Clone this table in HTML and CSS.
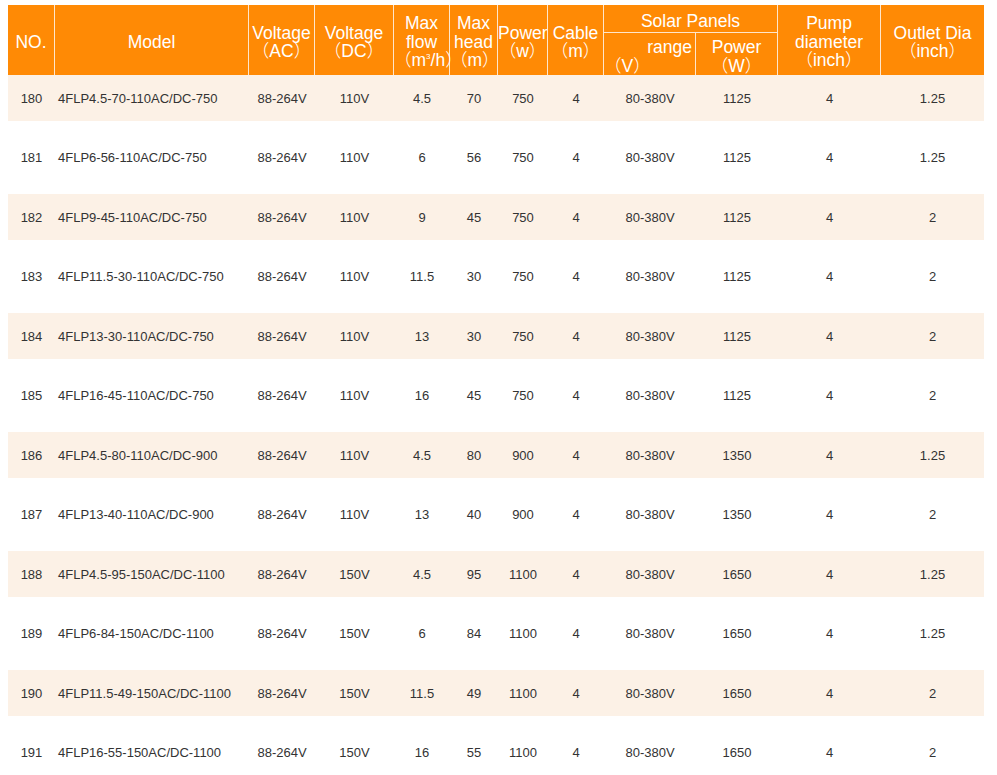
FILE: index.html
```html
<!DOCTYPE html>
<html>
<head>
<meta charset="utf-8">
<link rel="stylesheet" href="styles.css">
</head>
<body>
<table class="spec">
  <colgroup>
    <col class="c-no"><col class="c-model"><col class="c-vac"><col class="c-vdc"><col class="c-flow"><col class="c-head"><col class="c-pow"><col class="c-cable"><col class="c-range"><col class="c-spow"><col class="c-pump"><col class="c-outlet">
  </colgroup>
  <thead>
    <tr class="h1">
      <th rowspan="2">NO.</th>
      <th rowspan="2">Model</th>
      <th rowspan="2">Voltage<br><span class="fw">（</span>AC<span class="fw">）</span></th>
      <th rowspan="2">Voltage<br><span class="fw">（</span>DC<span class="fw">）</span></th>
      <th rowspan="2">Max<br>flow<br><span class="fw">（</span>m<sup>3</sup>/h<span class="fw">）</span></th>
      <th rowspan="2">Max<br>head<br><span class="fw">（</span>m<span class="fw">）</span></th>
      <th rowspan="2">Power<br><span class="fw">（</span>w<span class="fw">）</span></th>
      <th rowspan="2">Cable<br><span class="fw">（</span>m<span class="fw">）</span></th>
      <th colspan="2" class="solar">Solar Panels</th>
      <th rowspan="2">Pump<br>diameter<br><span class="fw">（</span>inch<span class="fw">）</span></th>
      <th rowspan="2" class="outlet">Outlet Dia<br><span class="fw">（</span>inch<span class="fw">）</span></th>
    </tr>
    <tr class="h2">
      <th class="range"><span class="r1">range</span><span class="r2"><span class="fw">（</span>V<span class="fw">）</span></span></th>
      <th>Power<br><span class="fw">（</span>W<span class="fw">）</span></th>
    </tr>
  </thead>
  <tbody>
    <tr class="cream"><td>180</td><td class="model">4FLP4.5-70-110AC/DC-750</td><td>88-264V</td><td>110V</td><td>4.5</td><td>70</td><td>750</td><td>4</td><td>80-380V</td><td>1125</td><td>4</td><td>1.25</td></tr>
    <tr class="plain"><td>181</td><td class="model">4FLP6-56-110AC/DC-750</td><td>88-264V</td><td>110V</td><td>6</td><td>56</td><td>750</td><td>4</td><td>80-380V</td><td>1125</td><td>4</td><td>1.25</td></tr>
    <tr class="cream"><td>182</td><td class="model">4FLP9-45-110AC/DC-750</td><td>88-264V</td><td>110V</td><td>9</td><td>45</td><td>750</td><td>4</td><td>80-380V</td><td>1125</td><td>4</td><td>2</td></tr>
    <tr class="plain"><td>183</td><td class="model">4FLP11.5-30-110AC/DC-750</td><td>88-264V</td><td>110V</td><td>11.5</td><td>30</td><td>750</td><td>4</td><td>80-380V</td><td>1125</td><td>4</td><td>2</td></tr>
    <tr class="cream"><td>184</td><td class="model">4FLP13-30-110AC/DC-750</td><td>88-264V</td><td>110V</td><td>13</td><td>30</td><td>750</td><td>4</td><td>80-380V</td><td>1125</td><td>4</td><td>2</td></tr>
    <tr class="plain"><td>185</td><td class="model">4FLP16-45-110AC/DC-750</td><td>88-264V</td><td>110V</td><td>16</td><td>45</td><td>750</td><td>4</td><td>80-380V</td><td>1125</td><td>4</td><td>2</td></tr>
    <tr class="cream"><td>186</td><td class="model">4FLP4.5-80-110AC/DC-900</td><td>88-264V</td><td>110V</td><td>4.5</td><td>80</td><td>900</td><td>4</td><td>80-380V</td><td>1350</td><td>4</td><td>1.25</td></tr>
    <tr class="plain"><td>187</td><td class="model">4FLP13-40-110AC/DC-900</td><td>88-264V</td><td>110V</td><td>13</td><td>40</td><td>900</td><td>4</td><td>80-380V</td><td>1350</td><td>4</td><td>2</td></tr>
    <tr class="cream"><td>188</td><td class="model">4FLP4.5-95-150AC/DC-1100</td><td>88-264V</td><td>150V</td><td>4.5</td><td>95</td><td>1100</td><td>4</td><td>80-380V</td><td>1650</td><td>4</td><td>1.25</td></tr>
    <tr class="plain"><td>189</td><td class="model">4FLP6-84-150AC/DC-1100</td><td>88-264V</td><td>150V</td><td>6</td><td>84</td><td>1100</td><td>4</td><td>80-380V</td><td>1650</td><td>4</td><td>1.25</td></tr>
    <tr class="cream"><td>190</td><td class="model">4FLP11.5-49-150AC/DC-1100</td><td>88-264V</td><td>150V</td><td>11.5</td><td>49</td><td>1100</td><td>4</td><td>80-380V</td><td>1650</td><td>4</td><td>2</td></tr>
    <tr class="plain"><td>191</td><td class="model">4FLP16-55-150AC/DC-1100</td><td>88-264V</td><td>150V</td><td>16</td><td>55</td><td>1100</td><td>4</td><td>80-380V</td><td>1650</td><td>4</td><td>2</td></tr>
  </tbody>
</table>
</body>
</html>
```
FILE: styles.css
```css
html, body {
  margin: 0;
  padding: 0;
  background: #ffffff;
}
body {
  padding: 5px 0 0 8px;
  font-family: "Liberation Sans", Arial, "Noto Sans CJK SC", sans-serif;
}
.spec {
  border-collapse: separate;
  border-spacing: 0;
  table-layout: fixed;
  width: 976px;
}
.c-no { width: 47px; }
.c-model { width: 194px; }
.c-vac { width: 66px; }
.c-vdc { width: 79px; }
.c-flow { width: 56px; }
.c-head { width: 48px; }
.c-pow { width: 50px; }
.c-cable { width: 56px; }
.c-range { width: 92px; }
.c-spow { width: 82px; }
.c-pump { width: 103px; }
.c-outlet { width: 103px; }

.spec th {
  background: #ff8a05;
  color: #ffffff;
  font-weight: normal;
  font-size: 17.5px;
  line-height: 18.5px;
  padding: 4px 0 0 0;
  border-right: 1px solid #ffe6cc;
  vertical-align: middle;
  text-align: center;
  white-space: nowrap;
  overflow: visible;
  text-spacing-trim: space-all;
}
.spec .fw {
  font-family: "Noto Sans CJK SC", sans-serif;
  font-weight: 300;
  line-height: 0;
  text-spacing-trim: space-all;
}
.spec th.outlet { border-right: none; }
.spec .h1 { height: 28px; }
.spec .h2 { height: 42px; }
.spec th.solar {
  border-bottom: 1px solid #ffe6cc;
  padding-top: 6px;
}
.spec .h2 th { padding-top: 5px; }
.spec sup {
  font-size: 8px;
  line-height: 0;
  vertical-align: 7px;
}
.range .r1 {
  display: block;
  text-align: right;
  padding-right: 3px;
}
.range .r2 {
  display: block;
  text-align: left;
}
.spec td {
  font-size: 13px;
  color: #333333;
  text-align: center;
  vertical-align: middle;
  padding: 0;
  white-space: nowrap;
}
.spec td.model {
  text-align: left;
  padding-left: 3px;
}
.spec tr.cream { height: 46px; }
.spec tr.cream td { background: #fcf1e6; }
.spec tr.plain { height: 73px; }
```
